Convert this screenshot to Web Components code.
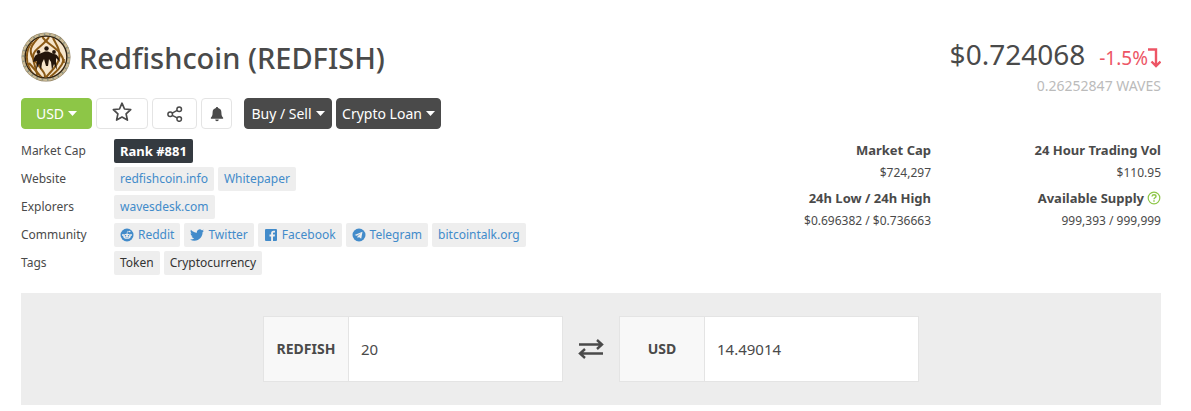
<!DOCTYPE html>
<html lang="en">
<head>
<meta charset="utf-8">
<meta name="viewport" content="width=device-width, initial-scale=1">
<title>Redfishcoin (REDFISH)</title>
<style>
  body {
    margin: 0;
    background: #fff;
    color: #4a4a4a;
    font-family: "Noto Sans", "Open Sans", sans-serif;
    font-size: 12px;
    line-height: 24px;
  }
</style>
</head>
<body>
<coin-page></coin-page>

<script>
const icons = {
  star: ['0 0 20 20', '<path d="M10 1.200l2.500 5.800 6.200.7-4.600 4.200 1.300 6.200L10 15l-5.400 3.100 1.300-6.200L1.300 7.700l6.200-.7z" fill="none" stroke="currentColor" stroke-width="1.700" stroke-linejoin="round"/>'],
  share: ['0 0 16 16', '<g fill="none" stroke="currentColor" stroke-width="1.500"><circle cx="3.200" cy="8.200" r="2.300"/><circle cx="12.200" cy="3.200" r="2.300"/><circle cx="12.200" cy="13" r="2.300"/><path d="M5.200 7.100l5-2.800M5.200 9.300l5 2.600"/></g>'],
  bell: ['0 0 14 16', '<path d="M7 1c.7 0 1.100.5 1.100 1.100C10.300 2.700 11.400 4.300 11.400 6.500c0 3 .7 3.900 1.600 4.900.5.600.1 1.400-.7 1.400H1.700c-.8 0-1.200-.8-.7-1.400.9-1 1.600-1.900 1.600-4.900 0-2.200 1.100-3.800 3.300-4.400C5.900 1.500 6.300 1 7 1zM5.200 13.500h3.600a1.800 1.800 0 0 1-3.600 0z" fill="currentColor"/>'],
  caret: ['0 0 9 5', '<path d="M0 0h9L4.500 5z" fill="currentColor"/>'],
  down: ['0 0 13 20', '<path d="M0 1.500h8v16M3.500 13.500l4.500 4.500 4.500-4.500" fill="none" stroke="currentColor" stroke-width="2.400"/>'],
  swap: ['0 0 26 20', '<path d="M1 5.500h23M19 1l5 4.500-5 4.500M25 14.500H2M7 10l-5 4.500L7 19" fill="none" stroke="currentColor" stroke-width="2.400"/>'],
  help: ['0 0 14 14', '<circle cx="7" cy="7" r="5.800" fill="none" stroke="currentColor" stroke-width="1.200"/><path d="M5 5.500c.2-1.300 1-1.800 2-1.800 1.200 0 2 .7 2 1.700 0 1.400-2 1.300-2 2.800M7 9.200v1.600" fill="none" stroke="currentColor" stroke-width="1.400"/>'],
  reddit: ['0 0 14 14', '<circle cx="7" cy="7" r="6.500" fill="currentColor"/><g fill="#eee"><ellipse cx="7" cy="8.300" rx="3.700" ry="2.600"/><circle cx="3" cy="7" r="1"/><circle cx="11" cy="7" r="1"/><circle cx="9.700" cy="3.500" r=".8"/></g><path d="M7 6l.6-2.700 2 .4" fill="none" stroke="#eee" stroke-width=".6"/><circle cx="5.500" cy="7.800" r=".8" fill="currentColor"/><circle cx="8.500" cy="7.800" r=".8" fill="currentColor"/><path d="M5.500 9.500q1.500 1 3 0" fill="none" stroke="currentColor" stroke-width=".6"/>'],
  twitter: ['0 0 24 24', '<path d="M23.950 4.570a10 10 0 0 1-2.820.77 4.960 4.960 0 0 0 2.160-2.720c-.95.550-2 .950-3.130 1.180a4.920 4.920 0 0 0-8.380 4.480C7.690 8.090 4.070 6.130 1.640 3.160a4.820 4.820 0 0 0-.67 2.480c0 1.700.87 3.210 2.190 4.090a4.900 4.900 0 0 1-2.230-.61v.06a4.920 4.920 0 0 0 3.950 4.830 5 5 0 0 1-2.210.08 4.940 4.940 0 0 0 4.600 3.420A9.870 9.870 0 0 1 0 19.540a14 14 0 0 0 7.550 2.210c9.050 0 14-7.500 14-13.980 0-.210 0-.420-.02-.63a9.940 9.940 0 0 0 2.420-2.570z" fill="currentColor"/>'],
  facebook: ['0 0 14 14', '<rect x="1" y="1" width="12" height="12" rx="1" fill="currentColor"/><path d="M9 13V8.500h1.700l.3-1.900H9V5.500c0-.7.300-1 1.100-1H11V2.700H9.500C7.900 2.700 7.100 3.700 7.100 5.200v1.400H5.500v1.900h1.600V13z" fill="#eee"/>'],
  telegram: ['0 0 14 14', '<circle cx="7" cy="7" r="6.500" fill="currentColor"/><path d="M2.500 7l8-3.300-1.300 7-2.300-1.700-1.200 1.200-.2-2L9 5.300 4.800 7.800z" fill="#eee"/>']
};

class CoinIcon extends HTMLElement {
  connectedCallback() {
    const [box, shape] = icons[this.getAttribute("name")];
    this.attachShadow({ mode: "open" }).innerHTML = /*html*/`
      <style>
        :host { display: inline-block; flex: none; width: 14px; height: 14px; }
        svg { display: block; width: 100%; height: 100%; }
      </style>
      <svg viewBox="${box}" aria-hidden="true">${shape}</svg>
    `;
  }
}
customElements.define("coin-icon", CoinIcon);

class CoinLogo extends HTMLElement {
  connectedCallback() {
    this.attachShadow({ mode: "open" }).innerHTML = /*html*/`
      <style>
        :host { display: block; flex: none; width: 50px; height: 50px; }
        svg { display: block; }
      </style>
      <svg viewBox="0 0 50 50" width="50" height="50" aria-hidden="true">
        <defs><clipPath id="disc"><circle cx="25" cy="25" r="20.500"/></clipPath></defs>
        <circle cx="25" cy="25" r="24.500" fill="#8d7c5c"/>
        <circle cx="25" cy="25" r="22.800" fill="none" stroke="#c9b994" stroke-width="2.600"/>
        <circle cx="25" cy="25" r="22.800" fill="none" stroke="#8b9384" stroke-width="2" stroke-dasharray="1.500 4"/>
        <circle cx="25" cy="25" r="20.800" fill="#f6e5cb" stroke="#2f2213" stroke-width="1.300"/>
        <g clip-path="url(#disc)" fill="none" stroke="#8a5915" stroke-width="2">
          <path d="M19 4C10 13 6 19 14 29s12 14 9 18"/>
          <path d="M28 5c-5 9-17 12-16 21s5 13 4 20"/>
          <path d="M21 4c4 9 20 12 22 27"/>
          <path d="M32 6c3 6 8 12 6 21S28 40 24 47"/>
          <path d="M11 10C4 19 4 32 12 42M8 31l13 15M43 27c-2 8-8 13-14 18"/>
        </g>
        <g fill="#24160b">
          <circle cx="25.500" cy="16.500" r="2.200"/>
          <circle cx="17.500" cy="20" r="1.900"/>
          <circle cx="33" cy="20" r="1.900"/>
          <path d="M12 30c1-6 3-8 6-8l6-2.500h3L33 22c3 0 5 3 6 8l-4-4 0 4 1 8-3-6-2 6-1-8-2-3-1 7-2 0-2-7-2 4-1 7-2-6-3 6 1-9z"/>
        </g>
      </svg>
    `;
  }
}
customElements.define("coin-logo", CoinLogo);

class CoinButton extends HTMLElement {
  connectedCallback() {
    const label = this.getAttribute("label");
    this.attachShadow({ mode: "open" }).innerHTML = /*html*/`
      <style>
        :host { display: block; }
        button {
          display: flex;
          align-items: center;
          justify-content: center;
          gap: 4px;
          box-sizing: border-box;
          width: 100%;
          height: 31px;
          padding: 0 4px;
          border: 1px solid #e4e4e4;
          border-radius: 4px;
          background: #fff;
          color: #4a4a4a;
          font: inherit;
          font-size: 14px;
          white-space: nowrap;
          cursor: pointer;
        }
        :host([kind="green"]) button { background: #8dc647; border-color: #8dc647; color: #fff; }
        :host([kind="dark"]) button { background: #4a4a4a; border-color: #4a4a4a; color: #fff; }
      </style>
      <button type="button"${label ? ` aria-label="${label}"` : ""}><slot></slot></button>
    `;
  }
}
customElements.define("coin-button", CoinButton);

class CoinRow extends HTMLElement {
  connectedCallback() {
    this.attachShadow({ mode: "open" }).innerHTML = /*html*/`
      <style>
        :host { display: flex; }
        .label { flex: none; width: 93px; }
        .items { display: flex; flex-wrap: wrap; gap: 4px; }
      </style>
      <span class="label">${this.getAttribute("label")}</span>
      <div class="items"><slot></slot></div>
    `;
  }
}
customElements.define("coin-row", CoinRow);

class CoinChip extends HTMLElement {
  connectedCallback() {
    const href = this.getAttribute("href");
    const icon = this.getAttribute("icon");
    const tag = href ? "a" : "span";
    this.attachShadow({ mode: "open" }).innerHTML = /*html*/`
      <style>
        :host { display: block; }
        .chip {
          display: flex;
          align-items: center;
          gap: 4px;
          padding: 0 6px;
          border-radius: 2px;
          background: #eee;
          color: #333;
          text-decoration: none;
          white-space: nowrap;
        }
        a.chip { color: #428bca; }
        :host([rank]) .chip { background: #343a40; color: #fff; font-size: 13px; font-weight: 700; }
      </style>
      <${tag} class="chip"${href ? ` href="${href}"` : ""}>${icon ? `<coin-icon name="${icon}"></coin-icon>` : ""}<slot></slot></${tag}>
    `;
  }
}
customElements.define("coin-chip", CoinChip);

class CoinStat extends HTMLElement {
  connectedCallback() {
    this.attachShadow({ mode: "open" }).innerHTML = /*html*/`
      <style>
        :host { display: block; text-align: right; white-space: nowrap; }
        .name {
          display: flex;
          align-items: center;
          justify-content: flex-end;
          gap: 3px;
          font-size: 13px;
          font-weight: 700;
          line-height: 22px;
        }
        coin-icon { color: #8dc647; }
      </style>
      <div class="name">${this.getAttribute("label")}${this.hasAttribute("help") ? '<coin-icon name="help"></coin-icon>' : ""}</div>
      <div><slot></slot></div>
    `;
  }
}
customElements.define("coin-stat", CoinStat);

class CoinPrice extends HTMLElement {
  connectedCallback() {
    this.attachShadow({ mode: "open" }).innerHTML = /*html*/`
      <style>
        :host { display: block; text-align: right; }
        .price {
          display: flex;
          align-items: baseline;
          justify-content: flex-end;
          gap: 14px;
          font-size: 28px;
          line-height: 44px;
        }
        .change { display: flex; align-items: center; font-size: 19px; line-height: 24px; color: #ed5565; }
        .change coin-icon { width: 13px; height: 20px; }
        .alt { font-size: 14px; line-height: 20px; color: #bbb; }
      </style>
      <div class="price">
        <span>$0.724068</span>
        <span class="change">-1.5%<coin-icon name="down"></coin-icon></span>
      </div>
      <div class="alt">0.26252847 WAVES</div>
    `;
  }
}
customElements.define("coin-price", CoinPrice);

class CoinField extends HTMLElement {
  connectedCallback() {
    this.attachShadow({ mode: "open" }).innerHTML = /*html*/`
      <style>
        :host { display: block; flex: 0 1 300px; min-width: 0; }
        .group { display: flex; height: 64px; border: 1px solid #e4e4e4; background: #fff; }
        label {
          display: flex;
          align-items: center;
          justify-content: center;
          flex: none;
          width: 84px;
          border-right: 1px solid #e4e4e4;
          background: #f8f8f8;
          font-size: 14px;
          font-weight: 700;
        }
        input {
          flex: 1;
          min-width: 0;
          padding: 0 12px;
          border: 0;
          background: none;
          color: inherit;
          font: inherit;
          font-size: 15px;
        }
      </style>
      <div class="group">
        <label for="amount">${this.getAttribute("label")}</label>
        <input id="amount" type="text" value="${this.getAttribute("value")}">
      </div>
    `;
  }
}
customElements.define("coin-field", CoinField);

class CoinConverter extends HTMLElement {
  connectedCallback() {
    this.attachShadow({ mode: "open" }).innerHTML = /*html*/`
      <style>
        :host {
          display: flex;
          align-items: center;
          justify-content: center;
          gap: 15px;
          padding: 23px 16px;
          background: #ededed;
        }
        coin-icon { width: 26px; height: 20px; }
      </style>
      <coin-field label="REDFISH" value="20"></coin-field>
      <coin-icon name="swap"></coin-icon>
      <coin-field label="USD" value="14.49014"></coin-field>
    `;
  }
}
customElements.define("coin-converter", CoinConverter);

class CoinPage extends HTMLElement {
  connectedCallback() {
    this.attachShadow({ mode: "open" }).innerHTML = /*html*/`
      <style>
        :host { display: block; padding: 32px 30px 6px 21px; }
        .top { display: flex; justify-content: space-between; gap: 24px; margin-bottom: 18px; }
        .title { display: flex; align-items: center; gap: 8px; margin-bottom: 16px; }
        h1 { margin: 0; padding-top: 2px; font-size: 29px; font-weight: 500; line-height: 40px; }
        .actions { display: flex; gap: 4px; margin-bottom: 10px; }
        .usd { width: 71px; }
        .star { width: 52px; }
        .share { width: 45px; }
        .bell { width: 31px; }
        .buy { width: 88px; margin-left: 8px; }
        .loan { width: 105px; }
        .caret { width: 9px; height: 5px; }
        .star coin-icon { width: 20px; height: 20px; margin-bottom: 4px; }
        .share coin-icon { width: 16px; height: 16px; }
        .bell coin-icon { height: 16px; }
        .rows { display: grid; gap: 4px; }
        coin-price { margin-bottom: 43px; }
        .stats { display: grid; grid-template-columns: 230px 230px; row-gap: 2px; }
      </style>
      <div class="top">
        <div>
          <div class="title">
            <coin-logo></coin-logo>
            <h1>Redfishcoin (REDFISH)</h1>
          </div>
          <div class="actions">
            <coin-button class="usd" kind="green">USD<coin-icon class="caret" name="caret"></coin-icon></coin-button>
            <coin-button class="star" label="Favorite"><coin-icon name="star"></coin-icon></coin-button>
            <coin-button class="share" label="Share"><coin-icon name="share"></coin-icon></coin-button>
            <coin-button class="bell" label="Alerts"><coin-icon name="bell"></coin-icon></coin-button>
            <coin-button class="buy" kind="dark">Buy / Sell<coin-icon class="caret" name="caret"></coin-icon></coin-button>
            <coin-button class="loan" kind="dark">Crypto Loan<coin-icon class="caret" name="caret"></coin-icon></coin-button>
          </div>
          <div class="rows">
            <coin-row label="Market Cap"><coin-chip rank>Rank #881</coin-chip></coin-row>
            <coin-row label="Website">
              <coin-chip href="#website">redfishcoin.info</coin-chip>
              <coin-chip href="#whitepaper">Whitepaper</coin-chip>
            </coin-row>
            <coin-row label="Explorers"><coin-chip href="#explorer">wavesdesk.com</coin-chip></coin-row>
            <coin-row label="Community">
              <coin-chip href="#reddit" icon="reddit">Reddit</coin-chip>
              <coin-chip href="#twitter" icon="twitter">Twitter</coin-chip>
              <coin-chip href="#facebook" icon="facebook">Facebook</coin-chip>
              <coin-chip href="#telegram" icon="telegram">Telegram</coin-chip>
              <coin-chip href="#bitcointalk">bitcointalk.org</coin-chip>
            </coin-row>
            <coin-row label="Tags">
              <coin-chip>Token</coin-chip>
              <coin-chip>Cryptocurrency</coin-chip>
            </coin-row>
          </div>
        </div>
        <div>
          <coin-price></coin-price>
          <div class="stats">
            <coin-stat label="Market Cap">$724,297</coin-stat>
            <coin-stat label="24 Hour Trading Vol">$110.95</coin-stat>
            <coin-stat label="24h Low / 24h High">$0.696382 / $0.736663</coin-stat>
            <coin-stat label="Available Supply" help>999,393 / 999,999</coin-stat>
          </div>
        </div>
      </div>
      <coin-converter></coin-converter>
    `;
  }
}
customElements.define("coin-page", CoinPage);
</script>
</body>
</html>
